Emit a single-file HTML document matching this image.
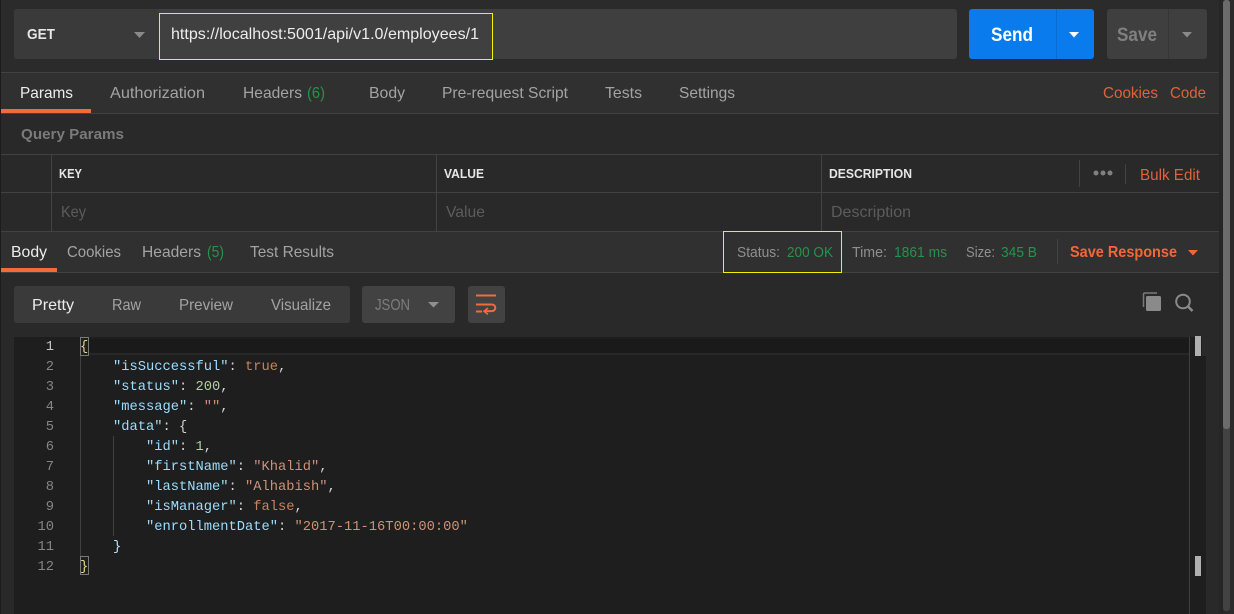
<!DOCTYPE html>
<html lang="en">
<head>
<meta charset="utf-8">
<title>Postman</title>
<style>
html,body{margin:0;padding:0;background:#2b2b2b;width:1234px;height:614px;overflow:hidden}
svg{display:block}
text{font-family:"Liberation Sans",sans-serif;font-size:16px;fill:#a3a3a3}
.b{font-weight:bold}
.o{fill:#e0623a}
.g{fill:#26924a}
.w{fill:#ececec}
.h{font-size:13px;font-weight:bold;fill:#e6e6e6}
.p{fill:#5c5c5c}
.m{fill:#8f8f8f}
.c text,text.c{font-family:"Liberation Mono",monospace;font-size:13.75px;fill:#d4d4d4;white-space:pre}
.k{fill:#9cdcfe}.s{fill:#ce9178}.n{fill:#b5cea8}.v{fill:#c9825f}.d{fill:#d4d4d4}
text.ln{font-family:"Liberation Mono",monospace;font-size:13.75px;fill:#858585;text-anchor:end}
</style>
</head>
<body>
<svg width="1234" height="614" viewBox="0 0 1234 614" xmlns="http://www.w3.org/2000/svg">
<rect width="1234" height="614" fill="#2b2b2b"/>
<rect x="0" y="0" width="1" height="614" fill="#1c1c1c"/>
<!-- page panels -->
<rect x="1" y="73" width="1218" height="40" fill="#303030"/>
<rect x="1" y="114" width="1218" height="117" fill="#292929"/>
<rect x="1" y="232" width="1218" height="40" fill="#303030"/>
<rect x="1" y="273" width="1218" height="341" fill="#292929"/>
<rect x="1219" y="0" width="15" height="614" fill="#2b2b2b"/>
<rect x="1219" y="0" width="4" height="614" fill="#262626"/>
<rect x="1223" y="0" width="7" height="611" rx="3" fill="#424242"/>
<rect x="1223" y="0" width="7" height="429" rx="3" fill="#6b6b6b"/>
<!-- url bar -->
<rect x="14" y="9" width="943" height="50" rx="3" fill="#3f3f3f"/>
<rect x="14" y="9" width="145" height="50" rx="3" fill="#3a3a3a"/>
<text x="27" y="39" class="b" style="fill:#e6e6e6;font-size:15px" textLength="28" lengthAdjust="spacingAndGlyphs">GET</text>
<path d="M134 32h11l-5.500 6z" fill="#8a8a8a"/>
<rect x="159.500" y="13.500" width="333" height="46" fill="#404040" stroke="#f2f200"/>
<text x="171" y="39" style="fill:#ececec" textLength="308" lengthAdjust="spacingAndGlyphs">https://localhost:5001/api/v1.0/employees/1</text>
<!-- send -->
<rect x="969" y="9" width="125" height="50" rx="3" fill="#097bed"/>
<rect x="1056" y="9" width="1" height="50" fill="#0a6cd0"/>
<text x="991" y="41" class="b" style="fill:#fff;font-size:19px" textLength="42" lengthAdjust="spacingAndGlyphs">Send</text>
<path d="M1069 32h10l-5 5.500z" fill="#fff"/>
<!-- save -->
<rect x="1107" y="9" width="100" height="50" rx="3" fill="#3f3f3f"/>
<rect x="1168" y="9" width="1" height="50" fill="#363636"/>
<text x="1117" y="41" class="b" style="fill:#808080;font-size:19px" textLength="40" lengthAdjust="spacingAndGlyphs">Save</text>
<path d="M1182 32h10l-5 5.500z" fill="#8a8a8a"/>
<!-- lines -->
<g fill="#424242">
<rect x="1" y="72" width="1218" height="1"/>
<rect x="1" y="113" width="1218" height="1"/>
<rect x="1" y="154" width="1218" height="1"/>
<rect x="1" y="192" width="1218" height="1"/>
<rect x="1" y="231" width="1218" height="1"/>
<rect x="1" y="272" width="1218" height="1"/>
<rect x="51" y="155" width="1" height="76"/>
<rect x="436" y="155" width="1" height="76"/>
<rect x="821" y="155" width="1" height="76"/>
<rect x="1079" y="160" width="1" height="27"/>
<rect x="1125" y="164" width="1" height="20"/>
<rect x="1057" y="239" width="1" height="25"/>
</g>
<!-- request tabs -->
<rect x="1" y="109" width="90" height="4" fill="#f26b3a"/>
<text x="20" y="98" style="fill:#ececec" textLength="53" lengthAdjust="spacingAndGlyphs">Params</text>
<text x="110" y="98" textLength="95" lengthAdjust="spacingAndGlyphs">Authorization</text>
<text x="243" y="98" textLength="59" lengthAdjust="spacingAndGlyphs">Headers</text>
<text x="307" y="98" class="g" textLength="18" lengthAdjust="spacingAndGlyphs">(6)</text>
<text x="369" y="98" textLength="36" lengthAdjust="spacingAndGlyphs">Body</text>
<text x="442" y="98" textLength="126" lengthAdjust="spacingAndGlyphs">Pre-request Script</text>
<text x="605" y="98" textLength="37" lengthAdjust="spacingAndGlyphs">Tests</text>
<text x="679" y="98" textLength="56" lengthAdjust="spacingAndGlyphs">Settings</text>
<text x="1103" y="98" class="o" textLength="55" lengthAdjust="spacingAndGlyphs">Cookies</text>
<text x="1170" y="98" class="o" textLength="36" lengthAdjust="spacingAndGlyphs">Code</text>
<!-- params -->
<text x="21" y="139" class="b" style="fill:#7a7a7a;font-size:15px" textLength="103" lengthAdjust="spacingAndGlyphs">Query Params</text>
<text x="59" y="178" class="h" textLength="23" lengthAdjust="spacingAndGlyphs">KEY</text>
<text x="444" y="178" class="h" textLength="40" lengthAdjust="spacingAndGlyphs">VALUE</text>
<text x="829" y="178" class="h" textLength="83" lengthAdjust="spacingAndGlyphs">DESCRIPTION</text>
<circle cx="1096" cy="173" r="2.500" fill="#808080"/><circle cx="1103" cy="173" r="2.500" fill="#808080"/><circle cx="1110" cy="173" r="2.500" fill="#808080"/>
<text x="1140" y="180" class="o" textLength="60" lengthAdjust="spacingAndGlyphs">Bulk Edit</text>
<text x="61" y="217" class="p" textLength="25" lengthAdjust="spacingAndGlyphs">Key</text>
<text x="446" y="217" class="p" textLength="39" lengthAdjust="spacingAndGlyphs">Value</text>
<text x="831" y="217" class="p" textLength="80" lengthAdjust="spacingAndGlyphs">Description</text>
<!-- response tabs -->
<rect x="1" y="268" width="56" height="4" fill="#f26b3a"/>
<text x="11" y="257" style="fill:#ececec" textLength="36" lengthAdjust="spacingAndGlyphs">Body</text>
<text x="67" y="257" textLength="54" lengthAdjust="spacingAndGlyphs">Cookies</text>
<text x="142" y="257" textLength="59" lengthAdjust="spacingAndGlyphs">Headers</text>
<text x="207" y="257" class="g" textLength="17" lengthAdjust="spacingAndGlyphs">(5)</text>
<text x="250" y="257" textLength="84" lengthAdjust="spacingAndGlyphs">Test Results</text>
<rect x="723.500" y="231.500" width="118" height="41" fill="none" stroke="#f2f200"/>
<text x="737" y="257" class="m" style="font-size:15px" textLength="43" lengthAdjust="spacingAndGlyphs">Status:</text>
<text x="787" y="257" class="g" style="font-size:15px" textLength="46" lengthAdjust="spacingAndGlyphs">200 OK</text>
<text x="852" y="257" class="m" style="font-size:15px" textLength="35" lengthAdjust="spacingAndGlyphs">Time:</text>
<text x="894" y="257" class="g" style="font-size:15px" textLength="53" lengthAdjust="spacingAndGlyphs">1861 ms</text>
<text x="966" y="257" class="m" style="font-size:15px" textLength="29" lengthAdjust="spacingAndGlyphs">Size:</text>
<text x="1001" y="257" class="g" style="font-size:15px" textLength="36" lengthAdjust="spacingAndGlyphs">345 B</text>
<text x="1070" y="257" class="b o" style="fill:#f0683a" textLength="107" lengthAdjust="spacingAndGlyphs">Save Response</text>
<path d="M1188 250h10l-5 5.500z" fill="#f0683a"/>
<!-- toolbar -->
<rect x="14" y="286" width="336" height="37" rx="3" fill="#3a3a3a"/>
<text x="32" y="310" style="fill:#ececec" textLength="42" lengthAdjust="spacingAndGlyphs">Pretty</text>
<text x="112" y="310" textLength="29" lengthAdjust="spacingAndGlyphs">Raw</text>
<text x="179" y="310" textLength="54" lengthAdjust="spacingAndGlyphs">Preview</text>
<text x="271" y="310" textLength="60" lengthAdjust="spacingAndGlyphs">Visualize</text>
<rect x="362" y="286" width="93" height="37" rx="3" fill="#424242"/>
<text x="375" y="310" style="fill:#7d7d7d" textLength="35" lengthAdjust="spacingAndGlyphs">JSON</text>
<path d="M428 302h11l-5.500 5.500z" fill="#8f8f8f"/>
<rect x="468" y="286" width="37" height="37" rx="3" fill="#424242"/>
<path d="M476 295.500h20M476 304.500h16a3.300 3.300 0 0 1 0 6.600h-7M476 311.500h6" fill="none" stroke="#f26b3a" stroke-width="2"/>
<path d="M488 308l-4 3.200 4 3.200" fill="none" stroke="#f26b3a" stroke-width="1.600"/>
<!-- copy + search -->
<path d="M1143.500 307v-12.500q0-1.500 1.500-1.500h12" fill="none" stroke="#7a7a7a" stroke-width="1.500"/>
<rect x="1146" y="296" width="15" height="15" rx="1.500" fill="#8a8a8a"/>
<circle cx="1183" cy="301.500" r="6.800" fill="none" stroke="#8a8a8a" stroke-width="2"/>
<path d="M1188 306.500l4.500 4.500" stroke="#8a8a8a" stroke-width="2.500" fill="none"/>
<!-- code -->
<rect x="14" y="337" width="1188" height="277" fill="#1e1e1e"/>
<rect x="1202" y="356" width="4" height="258" fill="#1e1e1e"/>
<rect x="88" y="339" width="1101" height="14" fill="#1a1a1a"/>
<rect x="88" y="353" width="1101" height="2" fill="#282828"/>
<rect x="1189" y="337" width="1" height="277" fill="#3f3f3f"/>
<rect x="1195" y="336" width="6" height="20" fill="#b0b0b0"/>
<rect x="1195" y="556" width="6" height="20" fill="#b0b0b0"/>
<rect x="80" y="355" width="1" height="201" fill="#404040"/>
<rect x="113" y="436" width="1" height="100" fill="#404040"/>
<rect x="80.500" y="337.500" width="8" height="18" fill="none" stroke="#7a7a7a"/>
<rect x="80.500" y="556.500" width="8" height="18" fill="none" stroke="#7a7a7a"/>
<text class="ln" x="54" y="350" style="fill:#c6c6c6">1</text>
<text class="ln" x="54" y="370">2</text>
<text class="ln" x="54" y="390">3</text>
<text class="ln" x="54" y="410">4</text>
<text class="ln" x="54" y="430">5</text>
<text class="ln" x="54" y="450">6</text>
<text class="ln" x="54" y="470">7</text>
<text class="ln" x="54" y="490">8</text>
<text class="ln" x="54" y="510">9</text>
<text class="ln" x="54" y="530">10</text>
<text class="ln" x="54" y="550">11</text>
<text class="ln" x="54" y="570">12</text>
<g class="c">
<text x="80" y="350" style="fill:#e6d58a">{</text>
<text x="113" y="370"><tspan class="k">"isSuccessful"</tspan><tspan class="d">: </tspan><tspan class="v">true</tspan><tspan class="d">,</tspan></text>
<text x="113" y="390"><tspan class="k">"status"</tspan><tspan class="d">: </tspan><tspan class="n">200</tspan><tspan class="d">,</tspan></text>
<text x="113" y="410"><tspan class="k">"message"</tspan><tspan class="d">: </tspan><tspan class="s">""</tspan><tspan class="d">,</tspan></text>
<text x="113" y="430"><tspan class="k">"data"</tspan><tspan class="d">: {</tspan></text>
<text x="146" y="450"><tspan class="k">"id"</tspan><tspan class="d">: </tspan><tspan class="n">1</tspan><tspan class="d">,</tspan></text>
<text x="146" y="470"><tspan class="k">"firstName"</tspan><tspan class="d">: </tspan><tspan class="s">"Khalid"</tspan><tspan class="d">,</tspan></text>
<text x="146" y="490"><tspan class="k">"lastName"</tspan><tspan class="d">: </tspan><tspan class="s">"Alhabish"</tspan><tspan class="d">,</tspan></text>
<text x="146" y="510"><tspan class="k">"isManager"</tspan><tspan class="d">: </tspan><tspan class="v">false</tspan><tspan class="d">,</tspan></text>
<text x="146" y="530"><tspan class="k">"enrollmentDate"</tspan><tspan class="d">: </tspan><tspan class="s">"2017-11-16T00:00:00"</tspan></text>
<text x="113" y="550" style="fill:#b9e2f5">}</text>
<text x="80" y="570" style="fill:#e6d58a">}</text>
</g>
</svg>
</body>
</html>
